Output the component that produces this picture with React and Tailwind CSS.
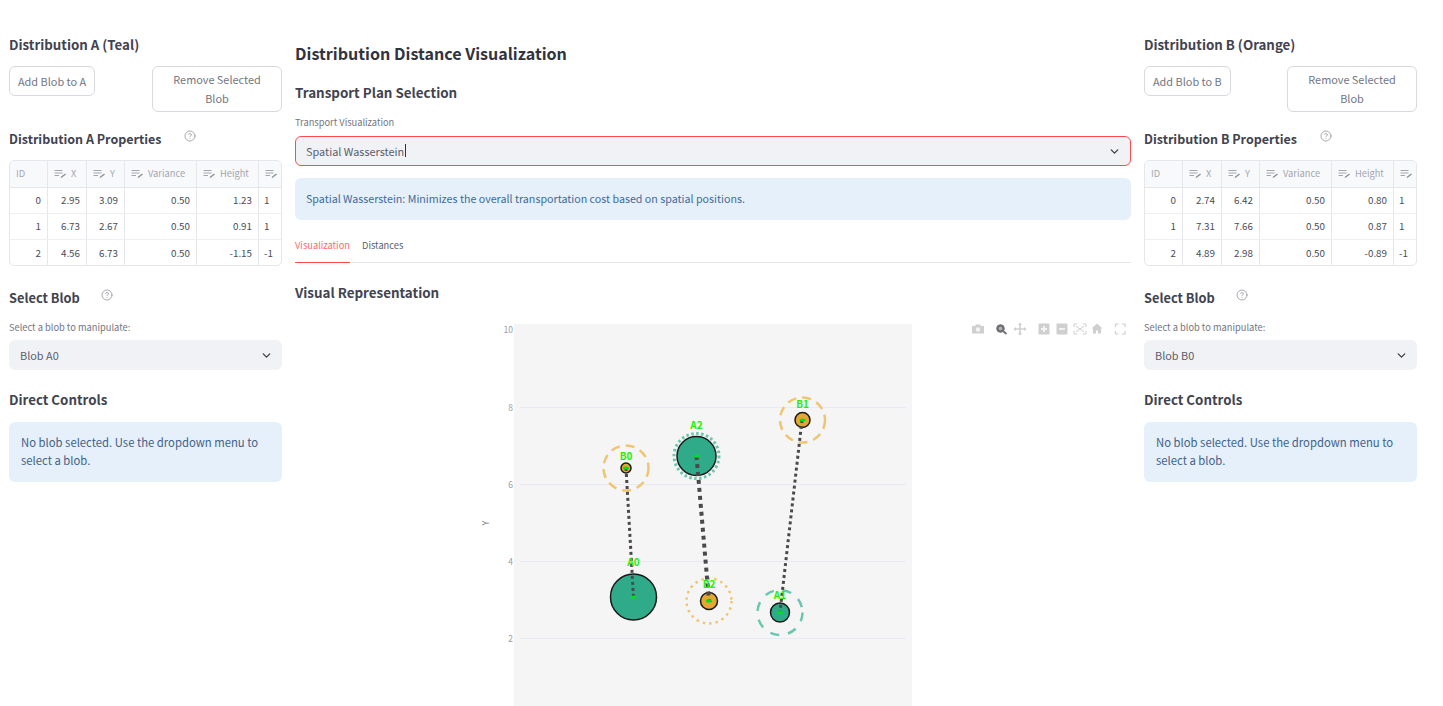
import React from 'react';
import { ChevronDown, CircleHelp } from 'lucide-react';

const FONT = '[font-family:"Noto_Sans_CJK_SC","Source_Sans_Pro",sans-serif]';

const SideHeading = ({ children, className = '' }) => (
  <h3 className={`text-[13.300px] leading-[20px] font-semibold text-[#41434f] whitespace-nowrap ${className}`}>{children}</h3>
);

const EditIcon = () => (
  <svg width="13" height="10" viewBox="0 0 13 10" fill="none" className="shrink-0">
    <path d="M0.5 1.5H8.5M0.5 4H8.5M0.5 6.5H5" stroke="#a3a6b0" strokeWidth="1" />
    <path d="M7 8.5L11.5 5" stroke="#8b8e98" strokeWidth="1.4" />
  </svg>
);

const GRID = 'grid grid-cols-[38px_39px_38px_72px_62px_24px]';

const HeaderCell = ({ label, icon = true }) => (
  <div className="flex items-center gap-[4px] pl-[6px] h-full border-r border-[#e6e7eb] text-[9.300px] text-[#a3a6b0] overflow-hidden whitespace-nowrap">
    {icon && <EditIcon />}
    <span>{label}</span>
  </div>
);

const PropsTable = ({ rows }) => (
  <div className="mt-[11px] h-[106px] rounded-[5px] border border-[#e6e7eb] overflow-hidden bg-white">
    <div className={`${GRID} h-[27px] bg-[#f8f9fb] border-b border-[#e6e7eb]`}>
      <HeaderCell label="ID" icon={false} />
      <HeaderCell label="X" />
      <HeaderCell label="Y" />
      <HeaderCell label="Variance" />
      <HeaderCell label="Height" />
      <HeaderCell label="" />
    </div>
    {rows.map((row, i) => (
      <div key={row[0]} className={`${GRID} h-[26px] text-[9.800px] text-[#4a4c57] ${i < 2 ? 'border-b border-[#eeeff2]' : ''}`}>
        {row.map((cell, j) => (
          <div
            key={j}
            className={`flex items-center border-r border-[#e6e7eb] ${j === 5 ? 'justify-start pl-[5px] border-r-0' : 'justify-end pr-[6px]'}`}
          >
            {cell}
          </div>
        ))}
      </div>
    ))}
  </div>
);

const SideColumn = ({ title, letter, rows, headingWidth }) => (
  <aside className="w-[273px] shrink-0">
    <SideHeading className="mt-[35px]">{title}</SideHeading>
    <div className="mt-[11px] grid grid-cols-2 gap-[13px] items-start">
      <button className="justify-self-start h-[30px] px-[8px] rounded-[6px] border border-[#d8d9de] text-[10.900px] text-[#73757f] whitespace-nowrap">
        Add Blob to {letter}
      </button>
      <button className="h-[46px] rounded-[6px] border border-[#d8d9de] text-[10.900px] leading-[19px] text-[#73757f] px-[12px]">
        Remove Selected Blob
      </button>
    </div>
    <div className="mt-[17px] flex items-start h-[20px]">
      <SideHeading className={`${headingWidth} shrink-0 !text-[12.500px]`}>Distribution {letter} Properties</SideHeading>
      <CircleHelp size={12} strokeWidth={1.4} className="text-[#85878f] mt-[1px]" />
    </div>
    <PropsTable rows={rows} />
    <div className="mt-[22px] flex items-start h-[20px]">
      <SideHeading className="w-[92px] shrink-0 !text-[12.800px]">Select Blob</SideHeading>
      <CircleHelp size={12} strokeWidth={1.4} className="text-[#85878f] mt-[1px]" />
    </div>
    <p className="mt-[12px] text-[9.300px] leading-[14px] text-[#73757f]">Select a blob to manipulate:</p>
    <div className="mt-[6px] h-[30px] rounded-[6px] bg-[#f0f2f6] flex items-center justify-between pl-[11px] pr-[9px] text-[10.900px] text-[#5c5e69]">
      <span>Blob {letter}0</span>
      <ChevronDown size={13} strokeWidth={2.4} className="text-[#3a3c48]" />
    </div>
    <SideHeading className="mt-[20px]">Direct Controls</SideHeading>
    <div className="mt-[12px] h-[60px] rounded-[6px] bg-[#e6f0fb] px-[12px] py-[11px] text-[11.300px] leading-[18px] text-[#3f6288]">
      No blob selected. Use the dropdown menu to select a blob.
    </div>
  </aside>
);

// drawn with page coordinates through the viewBox
const ModeBar = () => (
  <g fill="#cfcfcf" stroke="none">
    <path d="M972 326h3l1-1.500h4l1 1.500h3v7.500h-12z" />
    <circle cx="978" cy="329.500" r="2.200" fill="#f5f5f5" />
    <circle cx="1000.500" cy="328.500" r="3.800" fill="#6f7075" stroke="#6f7075" />
    <circle cx="1000.500" cy="328.500" r="1.800" fill="#b5b5b5" />
    <path d="M1003 331l3.500 3" stroke="#6f7075" strokeWidth="1.800" />
    <path d="M1020 323.500v11M1014.500 329h11" stroke="#cfcfcf" strokeWidth="1.600" />
    <path d="M1020 322.500l-2 2.500h4zM1020 335.500l-2-2.500h4zM1013.500 329l2.500-2v4zM1026.500 329l-2.500-2v4z" />
    <rect x="1038.500" y="323.500" width="11" height="11" rx="1" />
    <path d="M1044 326v6M1041 329h6" stroke="#f5f5f5" strokeWidth="1.800" />
    <rect x="1056.500" y="323.500" width="11" height="11" rx="1" />
    <path d="M1059 329h6" stroke="#f5f5f5" strokeWidth="1.800" />
    <path d="M1074 327v-3h3M1083 324h3v3M1086 331v3h-3M1077 334h-3v-3M1076 326l8 6M1084 326l-8 6" fill="none" stroke="#cfcfcf" strokeWidth="1" />
    <path d="M1097 323.500l-5.500 5h1.500v5h3v-3h2v3h3v-5h1.500z" />
    <path d="M1115.500 327v-3h3M1122 324h3v3M1125 331v3h-3M1118.500 334h-3v-3" fill="none" stroke="#cfcfcf" strokeWidth="1.200" />
  </g>
);

const LINES = [
  { d: 'M626 468L633.500 597', w: 3 },
  { d: 'M696.500 456L709 601', w: 4 },
  { d: 'M802 420L780 612', w: 3 },
];

const BLOBS = [
  { id: 'A0', cx: 633.500, cy: 597, r: 23, fill: '#2fab8a', labelY: 566 },
  { id: 'A1', cx: 780, cy: 612.500, r: 9.500, fill: '#2fab8a', ring: { stroke: '#6cc6ae', dash: '9 9' }, labelY: 599 },
  { id: 'A2', cx: 696.500, cy: 456, r: 19.500, fill: '#2fab8a', ring: { stroke: '#6cc6ae', dash: '2.500 2.500', w: 3 }, labelY: 429 },
  { id: 'B0', cx: 626, cy: 468, r: 5, fill: '#e5a72f', ring: { stroke: '#f0c572', dash: '9 6' }, labelY: 460 },
  { id: 'B1', cx: 802.500, cy: 420, r: 7.500, fill: '#e5a72f', ring: { stroke: '#f0c572', dash: '9 6' }, labelY: 408 },
  { id: 'B2', cx: 709, cy: 601, r: 8.500, fill: '#e5a72f', ring: { stroke: '#f0c572', dash: '2.500 4', w: 2.500 }, labelY: 588 },
];

const Chart = () => (
  <svg viewBox="295 322 836 384" className="block w-full h-[384px] mt-[20px]">
    <rect x="514" y="324" width="398" height="382" fill="#f5f5f5" />
    {[407.500, 484.500, 561.500, 638.500].map((y) => (
      <path key={y} d={`M520 ${y}H906`} stroke="#e8eaf3" strokeWidth="1" />
    ))}
    <g fill="#9a9ca5" fontSize="8.500" textAnchor="end">
      <text x="513" y="333">10</text>
      <text x="513" y="411">8</text>
      <text x="513" y="488">6</text>
      <text x="513" y="565">4</text>
      <text x="513" y="642">2</text>
    </g>
    <text transform="translate(489 523) rotate(-90)" fill="#6e7380" fontSize="9" textAnchor="middle">Y</text>
    {BLOBS.filter((b) => b.ring).map((b) => (
      <circle key={b.id} cx={b.cx} cy={b.cy} r={22.500} fill="none" stroke={b.ring.stroke} strokeWidth={b.ring.w || 2.500} strokeDasharray={b.ring.dash} />
    ))}
    {BLOBS.map((b) => (
      <circle key={b.id} cx={b.cx} cy={b.cy} r={b.r} fill={b.fill} stroke="#1a1a1a" strokeWidth="1.500" />
    ))}
    {LINES.map((l) => (
      <path key={l.d} d={l.d} stroke="#4a4a4a" strokeWidth={l.w} strokeDasharray={`${l.w} ${l.w}`} fill="none" />
    ))}
    {BLOBS.map((b) => (
      <g key={b.id}>
        <ellipse cx={b.cx} cy={b.cy} rx="3" ry="1.500" fill="#00e020" />
        <text x={b.cx} y={b.labelY} fill="#22f000" fontSize="10" fontWeight="700" textAnchor="middle">{b.id}</text>
      </g>
    ))}
    <ModeBar />
  </svg>
);

const CenterColumn = () => (
  <main className="flex-1 min-w-0">
    <h2 className="mt-[41px] text-[16.100px] leading-[24px] font-semibold text-[#31333f]">Distribution Distance Visualization</h2>
    <h3 className="mt-[17px] text-[13.400px] leading-[20px] font-semibold text-[#41434f]">Transport Plan Selection</h3>
    <p className="mt-[13px] text-[9.300px] leading-[14px] text-[#73757f]">Transport Visualization</p>
    <div className="mt-[7px] h-[30px] rounded-[6px] bg-[#f0f2f6] border border-[#ff4b4b] flex items-center justify-between pl-[10px] pr-[9px] text-[10.900px] text-[#5c5e69]">
      <span className="flex items-center">
        Spatial Wasserstein
        <span className="inline-block ml-[1px] w-px h-[13px] bg-[#31333f]" />
      </span>
      <ChevronDown size={13} strokeWidth={2.4} className="text-[#3a3c48]" />
    </div>
    <div className="mt-[12px] h-[42px] rounded-[6px] bg-[#e6f0fb] flex items-center px-[11px] text-[10.700px] text-[#3f6a99]">
      Spatial Wasserstein: Minimizes the overall transportation cost based on spatial positions.
    </div>
    <div className="mt-[14px] h-[29px] border-b border-[#e6e7eb] flex gap-[12px] text-[9.300px]">
      <div className="h-[29px] -mb-px w-[55px] border-b border-[#ff4b4b] text-[#ff6c6c] leading-[23px]">Visualization</div>
      <div className="text-[#5c5e69] leading-[23px]">Distances</div>
    </div>
    <h3 className="mt-[19px] text-[13.400px] leading-[20px] font-semibold text-[#41434f]">Visual Representation</h3>
    <Chart />
  </main>
);

const rowsA = [
  ['0', '2.95', '3.09', '0.50', '1.23', '1'],
  ['1', '6.73', '2.67', '0.50', '0.91', '1'],
  ['2', '4.56', '6.73', '0.50', '-1.15', '-1'],
];

const rowsB = [
  ['0', '2.74', '6.42', '0.50', '0.80', '1'],
  ['1', '7.31', '7.66', '0.50', '0.87', '1'],
  ['2', '4.89', '2.98', '0.50', '-0.89', '-1'],
];

export default function App() {
  return (
    <div className={`h-[706px] w-[1443px] overflow-hidden bg-white flex gap-[13px] pl-[9px] pr-[26px] ${FONT}`}>
      <SideColumn title="Distribution A (Teal)" letter="A" rows={rowsA} headingWidth="w-[175px]" />
      <CenterColumn />
      <SideColumn title="Distribution B (Orange)" letter="B" rows={rowsB} headingWidth="w-[176px]" />
    </div>
  );
}
